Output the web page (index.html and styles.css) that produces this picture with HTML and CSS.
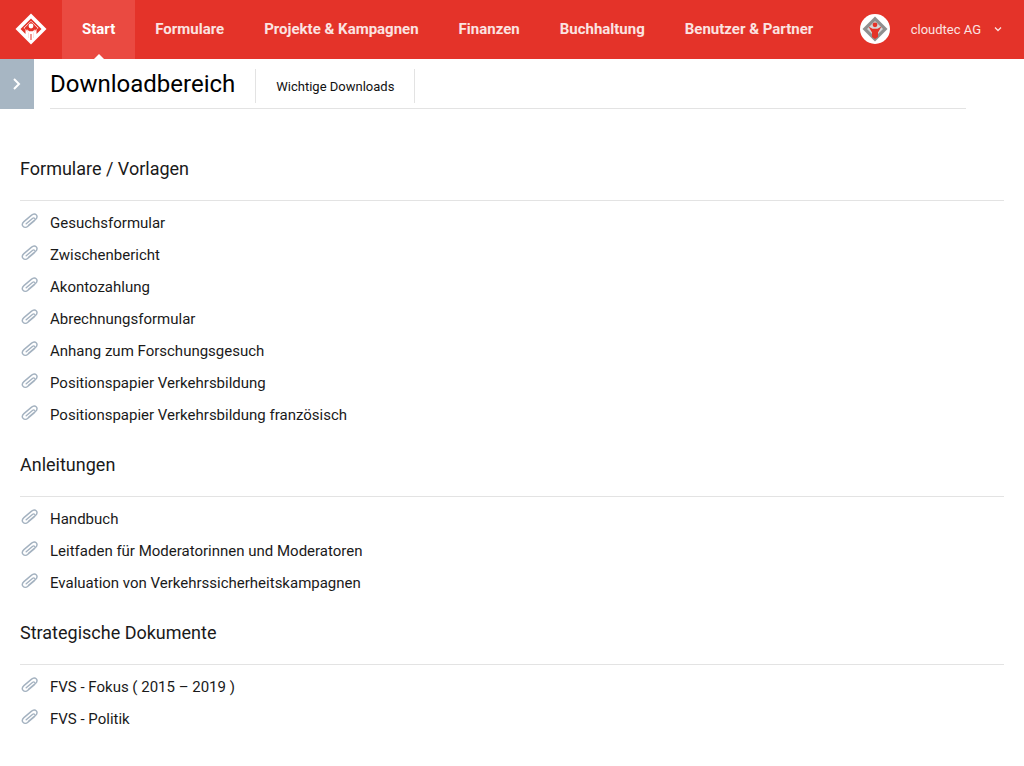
FILE: index.html
```html
<!DOCTYPE html>
<html lang="de">
<head>
<meta charset="utf-8">
<title>Downloadbereich</title>
<link rel="stylesheet" href="styles.css">
</head>
<body>
<svg class="defs" width="0" height="0" aria-hidden="true">
  <symbol id="clip" viewBox="0 0 18 18">
    <path d="M7.500 13.300 14.300 7.600C15.900 6.200 16.500 4.300 15.300 2.900 14.100 1.500 12.200 1.700 10.600 3.100L2.900 9.600C1.300 11 .9 13 2.100 14.400 3.300 15.800 5.300 15.700 6.900 14.300L13.200 9M5.200 11.700 11.400 6.500C12.100 5.900 12.900 5.700 13.400 6.200" fill="none" stroke="#a4b2c0" stroke-width="1.400" stroke-linecap="round" stroke-linejoin="round"/>
  </symbol>
</svg>
<header class="topbar">
  <div class="logo">
    <svg width="32" height="32" viewBox="0 0 32 32">
      <path d="M16 .5 31.500 16 16 31.500 .5 16Z" fill="#fff"/>
      <path d="M16 5.500 26.500 16 21.500 21V16.500L23.500 15 16 8 8.500 15 10.500 16.500V21L5.500 16Z" fill="#e43329" transform="translate(0 0)"/>
      <path d="M16 8.500 22.800 15.300 18.500 19V25H13.500V19L9.200 15.300Z" fill="#e43329"/>
      <circle cx="16" cy="13" r="2.400" fill="#fff"/>
      <path d="M11.500 16 14.300 18.300H17.700L20.500 16 18.700 19.800V26.500L16 29 13.300 26.500V19.800Z" fill="#fff"/>
      <path d="M15.500 21H16.500V27H15.500Z" fill="#e43329"/>
    </svg>
  </div>
  <nav class="mainnav">
    <a class="navitem active">Start</a>
    <a class="navitem">Formulare</a>
    <a class="navitem">Projekte &amp; Kampagnen</a>
    <a class="navitem">Finanzen</a>
    <a class="navitem">Buchhaltung</a>
    <a class="navitem">Benutzer &amp; Partner</a>
  </nav>
  <div class="account">
    <span class="avatar">
      <svg width="30" height="30" viewBox="0 0 30 30">
        <circle cx="15" cy="15" r="15" fill="#fff"/>
        <path d="M15 2.500 27.500 15 15 27.500 2.500 15Z" fill="#8f8f8f"/>
        <path d="M15 7 23 15 15 23 7 15Z" fill="#d6d6d6"/>
        <circle cx="15" cy="10.800" r="2.400" fill="#e43329"/>
        <path d="M8.500 12.500 12.500 14.800H17.500L21.500 12.500 18 18.500V23L15 25 12 23V18.500Z" fill="#e43329"/>
      </svg>
    </span>
    <span class="company">cloudtec AG</span>
    <svg class="chev" width="8" height="6" viewBox="0 0 8 6"><path d="M1 1.500 4 4.500 7 1.500" fill="none" stroke="#fbe3e1" stroke-width="1.300"/></svg>
  </div>
</header>
<div class="titlerow">
  <button class="sidetoggle" aria-label="Menü">
    <svg width="10" height="14" viewBox="0 0 10 14"><path d="M2 2 7 7 2 12" fill="none" stroke="#fff" stroke-width="2"/></svg>
  </button>
  <div class="titlebar">
    <h1>Downloadbereich</h1>
    <a class="subtab">Wichtige Downloads</a>
  </div>
</div>
<main class="content">
  <section class="group">
    <h2>Formulare / Vorlagen</h2>
    <ul>
      <li><svg class="clip"><use href="#clip"/></svg>Gesuchsformular</li>
      <li><svg class="clip"><use href="#clip"/></svg>Zwischenbericht</li>
      <li><svg class="clip"><use href="#clip"/></svg>Akontozahlung</li>
      <li><svg class="clip"><use href="#clip"/></svg>Abrechnungsformular</li>
      <li><svg class="clip"><use href="#clip"/></svg>Anhang zum Forschungsgesuch</li>
      <li><svg class="clip"><use href="#clip"/></svg>Positionspapier Verkehrsbildung</li>
      <li><svg class="clip"><use href="#clip"/></svg>Positionspapier Verkehrsbildung französisch</li>
    </ul>
  </section>
  <section class="group">
    <h2>Anleitungen</h2>
    <ul>
      <li><svg class="clip"><use href="#clip"/></svg>Handbuch</li>
      <li><svg class="clip"><use href="#clip"/></svg>Leitfaden für Moderatorinnen und Moderatoren</li>
      <li><svg class="clip"><use href="#clip"/></svg>Evaluation von Verkehrssicherheitskampagnen</li>
    </ul>
  </section>
  <section class="group">
    <h2>Strategische Dokumente</h2>
    <ul>
      <li><svg class="clip"><use href="#clip"/></svg>FVS - Fokus ( 2015 – 2019 )</li>
      <li><svg class="clip"><use href="#clip"/></svg>FVS - Politik</li>
    </ul>
  </section>
</main>
</body>
</html>
```
FILE: styles.css
```css
* { box-sizing: border-box; }
html, body { margin: 0; padding: 0; }
body { font-family: Roboto, "Liberation Sans", sans-serif; color: #111; background: #fff; height: 766px; overflow: hidden; }
.defs { position: absolute; }
.topbar { display: flex; align-items: stretch; height: 59px; background: #e43329; }
.logo { width: 62px; display: flex; align-items: center; justify-content: center; padding-bottom: 2px; }
.mainnav { display: flex; flex: 1; }
.navitem { position: relative; display: flex; align-items: center; padding: 0 20px 1px; color: #fbe3e1; font-size: 15px; font-weight: 700; }
.navitem.active { background: #ea4a41; color: #fff; }
.navitem.active::after { content: ""; position: absolute; left: 50%; bottom: 0; margin-left: -5px; border: 5px solid transparent; border-top: 0; border-bottom-color: #fff; }
.account { display: flex; align-items: center; color: #fbe3e1; font-size: 13px; padding-right: 22px; }
.avatar { display: flex; margin: -1px 20px 0 -1px; }
.company { margin-left: 1px; margin-top: -1px; }
.chev { margin-left: 13px; margin-top: -1px; }
.titlerow { display: flex; height: 50px; }
.sidetoggle { width: 34px; height: 50px; border: 0; padding: 0; background: #a7b6c3; display: flex; align-items: center; justify-content: center; }
.titlebar { display: flex; width: 916px; margin-left: 16px; border-bottom: 1px solid #e3e3e3; align-items: stretch; }
h1 { margin: 0; font-size: 24px; font-weight: 400; color: #000; line-height: 50px; padding-right: 20px; }
.subtab { align-self: flex-start; margin-top: 10px; height: 34px; display: flex; align-items: center; padding: 0 20px; font-size: 13px; color: #111; border-left: 1px solid #e3e3e3; border-right: 1px solid #e3e3e3; }
.content { padding: 0 20px; }
.group h2 { margin: 0; padding: 0; height: 43px; border-bottom: 1px solid #e3e3e3; font-size: 18px; font-weight: 400; line-height: 21px; color: #1a1a1a; }
.group { padding-top: 49px; }
.group + .group { padding-top: 23px; }
ul { list-style: none; margin: 0; padding: 6px 0 0; }
li { position: relative; display: flex; align-items: center; height: 32px; font-size: 15px; color: #1a1a1a; padding-left: 30px; }
.clip { position: absolute; left: 1px; top: 5px; width: 18px; height: 18px; }
```
